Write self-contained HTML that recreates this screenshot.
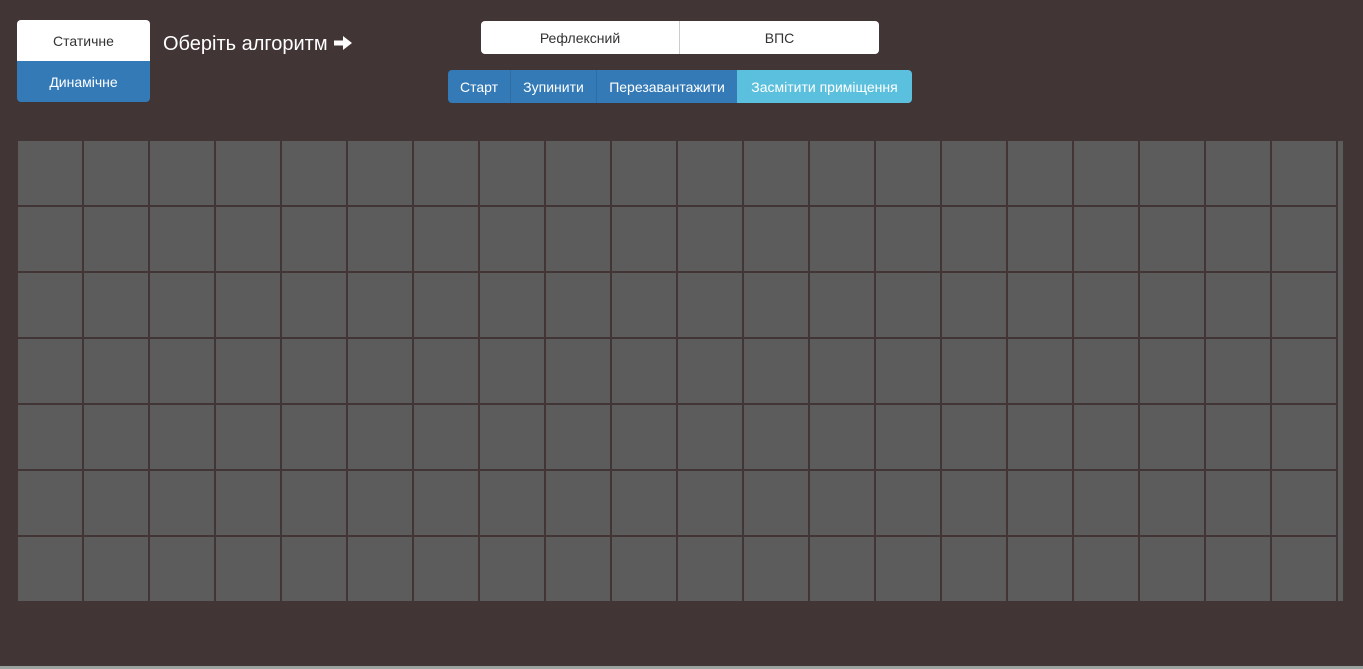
<!DOCTYPE html>
<html><head><meta charset="utf-8"><style>
*{box-sizing:border-box;margin:0;padding:0}
body{width:1363px;height:669px;background:#413536;position:relative;overflow:hidden;font-family:"Liberation Sans",Arial,sans-serif;font-size:14px}
.a{position:absolute;display:flex;align-items:center;justify-content:center}
.c{position:absolute;width:64px;height:64px;background:#5c5c5c}
</style></head><body>
<div class="a" style="left:17px;top:20px;width:133px;height:41px;background:#fff;color:#333;border-radius:4px 4px 0 0">Статичне</div>
<div class="a" style="left:17px;top:61px;width:133px;height:41px;background:#337ab7;color:#fff;border-radius:0 0 4px 4px">Динамічне</div>
<div style="position:absolute;left:163px;top:33px;color:#fff;font-size:20px;white-space:nowrap">Оберіть алгоритм <svg width="20" height="16" viewBox="0 0 20 16" style="vertical-align:-1px"><path d="M1 5.5h9V1l9 7-9 7v-4.5H1z" fill="#fff"/></svg></div>
<div class="a" style="left:481px;top:21px;width:199px;height:33px;background:#fff;color:#333;border-radius:4px 0 0 4px;border-right:1px solid #ccc">Рефлексний</div>
<div class="a" style="left:680px;top:21px;width:199px;height:33px;background:#fff;color:#333;border-radius:0 4px 4px 0">ВПС</div>
<div class="a" style="left:448px;top:70px;width:63px;height:33px;background:#337ab7;color:#fff;border-radius:4px 0 0 4px;border-right:1px solid #2e6da4">Старт</div>
<div class="a" style="left:511px;top:70px;width:86px;height:33px;background:#337ab7;color:#fff;border-right:1px solid #2e6da4">Зупинити</div>
<div class="a" style="left:597px;top:70px;width:140px;height:33px;background:#337ab7;color:#fff">Перезавантажити</div>
<div class="a" style="left:737px;top:70px;width:175px;height:33px;background:#5bc0de;color:#fff;border-radius:0 4px 4px 0">Засмітити приміщення</div>
<div style="position:absolute;left:1338px;top:141px;width:5px;height:460px;background:#5c5c5c"></div>
<div id="g"></div>
<div style="position:absolute;left:0;top:666px;width:1363px;height:3px;background:#9aa3a0"></div>
<script>
var h='';for(var r=0;r<7;r++)for(var c=0;c<20;c++)h+='<div class="c" style="left:'+(18+c*66)+'px;top:'+(141+r*66)+'px"></div>';
document.getElementById('g').innerHTML=h;
</script>
</body></html>
